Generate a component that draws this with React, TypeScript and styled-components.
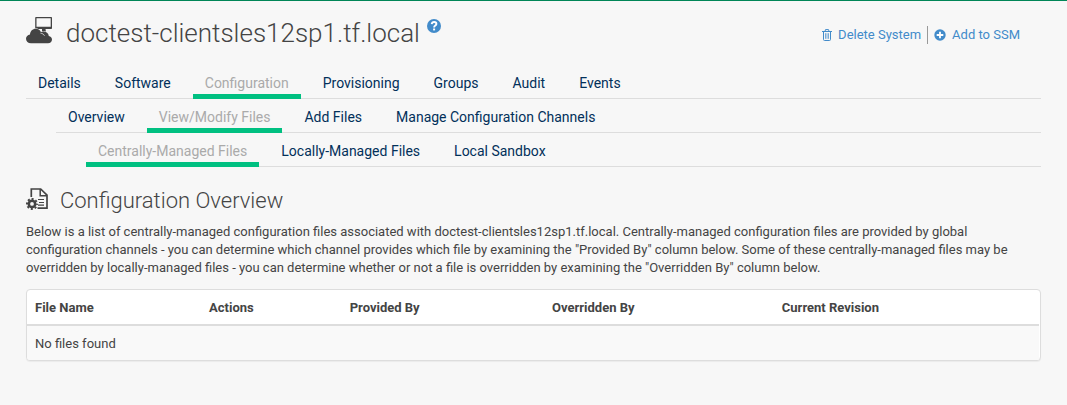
import React from 'react';
import styled, { createGlobalStyle } from 'styled-components';

const GlobalStyle = createGlobalStyle`
  *, *::before, *::after { box-sizing: border-box; }
  body {
    margin: 0;
    background: #f7f7f7;
    color: #444;
    font: 13px/18px Roboto, "Liberation Sans", sans-serif;
  }
`;

const Page = styled.main`
  border-top: 1px solid #008657;
  padding: 13px 26px 44px;
`;

const Header = styled.header`
  display: flex;
  justify-content: space-between;
  align-items: flex-start;
`;

const TitleGroup = styled.div`
  display: flex;
  align-items: flex-start;
`;

const Title = styled.h1`
  margin: 0 0 0 14px;
  font-size: 26px;
  line-height: 38px;
  font-weight: 300;
`;

const SystemIcon = styled.svg`
  width: 26px;
  height: 27px;
  margin-top: 3px;
  fill: #444;
`;

const HelpLink = styled.a`
  display: flex;
  margin: 5px 0 0 7px;
`;

const Toolbar = styled.div`
  display: flex;
  align-items: center;
  gap: 6px;
  padding: 12px 21px 0 0;
`;

const ToolbarLink = styled.a`
  display: flex;
  align-items: center;
  gap: 6px;
  color: #428bca;
  text-decoration: none;
`;

const Divider = styled.span`
  width: 1px;
  height: 18px;
  background: #999;
`;

const TabNav = styled.nav`
  padding-top: 16px;
`;

const TabRow = styled.ul<{ $level: number }>`
  display: flex;
  gap: 10px;
  margin: 0 0 0 ${(p) => p.$level * 30}px;
  padding: ${(p) => (p.$level ? 3 : 0)}px 0 0;
  list-style: none;
  border-bottom: 1px solid #ddd;
`;

const Tab = styled.a<{ $active: boolean }>`
  display: block;
  height: 31px;
  margin-bottom: -1px;
  padding: 4px 12px 0;
  border-bottom: 5px solid ${(p) => (p.$active ? '#00c081' : 'transparent')};
  color: ${(p) => (p.$active ? '#aaa' : '#02305a')};
  font-size: 14px;
  line-height: 22px;
  text-decoration: none;
`;

const SectionHeading = styled.div`
  display: flex;
  align-items: center;
  gap: 12px;
  padding-top: 18px;
`;

const FileIcon = styled.svg`
  width: 22px;
  height: 22px;
  margin-bottom: 4px;
`;

const SectionTitle = styled.h2`
  margin: 0;
  font-size: 22px;
  line-height: 32px;
  font-weight: 300;
`;

const Description = styled.p`
  margin: 6px 0 12px;
`;

const Panel = styled.section`
  overflow: hidden;
  padding-right: 1px;
  border: 1px solid #ddd;
  border-radius: 4px;
  background: #fff;
  box-shadow: 0 1px 1px rgba(0, 0, 0, 0.05);
`;

const Table = styled.table`
  width: 100%;
  border-collapse: separate;
  border-spacing: 0;
  text-align: left;
`;

const HeadCell = styled.th<{ $width?: string }>`
  width: ${(p) => p.$width ?? 'auto'};
  padding: 9px 8px 7px;
  border-bottom: 2px solid #ddd;
  font-weight: 700;
`;

const Cell = styled.td`
  padding: 9px 8px 7px;
  background: #f9f9f9;
`;

const tabRows = [
  {
    label: 'System',
    active: 'Configuration',
    tabs: ['Details', 'Software', 'Configuration', 'Provisioning', 'Groups', 'Audit', 'Events'],
  },
  {
    label: 'Configuration',
    active: 'View/Modify Files',
    tabs: ['Overview', 'View/Modify Files', 'Add Files', 'Manage Configuration Channels'],
  },
  {
    label: 'Files',
    active: 'Centrally-Managed Files',
    tabs: ['Centrally-Managed Files', 'Locally-Managed Files', 'Local Sandbox'],
  },
];

const columns = [
  { name: 'File Name', width: '17.2%' },
  { name: 'Actions', width: '13.9%' },
  { name: 'Provided By', width: '20%' },
  { name: 'Overridden By', width: '22.7%' },
  { name: 'Current Revision' },
];

const VirtualSystemIcon = () => (
  <SystemIcon viewBox="0 0 26 27" aria-hidden="true">
    <path fillRule="evenodd" d="M10 0h15.2q.8 0 .8.8v10.400q0 .8-.8.8H10q-.8 0-.8-.8V.8Q9.200 0 10 0ZM10.500 1.300v8.500h14.200V1.300Z" />
    <path d="M16 12h3.500l.5 3h-4Z" />
    <path
      stroke="#f7f7f7"
      strokeWidth="1"
      paintOrder="stroke"
      d="M5 26.300C2 26.300 0 24.300 0 21.800c0-2.300 1.700-4 4-4.400.2-3.200 2.600-5.600 5.700-5.600 2.300 0 4.200 1.200 5.200 3.200 3.700-1.500 7.500.4 7.900 3.900 1.900.3 3.200 1.700 3.200 3.600 0 2.200-1.700 3.800-4 3.800Z"
    />
    <path d="M14.500 16.200c2 .2 3.300 1.100 4 2.600" fill="none" stroke="#f7f7f7" strokeWidth=".7" />
  </SystemIcon>
);

const HelpIcon = () => (
  <svg width="14" height="14" viewBox="0 0 14 14" aria-hidden="true">
    <circle cx="7" cy="7" r="7" fill="#428bca" />
    <path d="M4.700 5.200C4.900 3.700 5.800 3 7.100 3c1.400 0 2.300.8 2.300 1.900C9.400 6.500 7.100 6.500 7.100 8.400" fill="none" stroke="#fff" strokeWidth="1.900" />
    <path d="M6.100 9.500h2v1.900h-2z" fill="#fff" />
  </svg>
);

const TrashIcon = () => (
  <svg width="10" height="12" viewBox="0 0 10 12" fill="none" stroke="#428bca" aria-hidden="true">
    <path d="M0 2.500h10M3 2.300l.5-1.700h3l.5 1.700M1.500 2.500v8q0 1 1 1h5q1 0 1-1v-8" />
    <path d="M3.500 4.200v5.600M5 4.200v5.600M6.500 4.200v5.600" strokeWidth=".7" />
  </svg>
);

const AddIcon = () => (
  <svg width="12" height="12" viewBox="0 0 12 12" aria-hidden="true">
    <circle cx="6" cy="6" r="5.700" fill="#428bca" />
    <path d="M6 2.700v6.600M2.700 6h6.600" stroke="#fff" strokeWidth="1.800" />
  </svg>
);

const ConfigFileIcon = () => (
  <FileIcon viewBox="0 0 22 22" fill="none" stroke="#444" aria-hidden="true">
    <path d="M5.300 9V1h9.400L21 7.200v12.900h-9.500" strokeWidth="1.700" />
    <path d="M14.200 1v6.700H21" strokeWidth="1.500" />
    <path d="M12 11.500h6M13 14.500h5M12 17.200h6" strokeWidth="1.200" />
    <circle cx="6" cy="15.900" r="3.200" strokeWidth="2.600" />
    <circle cx="6" cy="15.900" r="5" strokeWidth="2" strokeDasharray="2 1.927" strokeDashoffset="1" />
  </FileIcon>
);

export default function App() {
  return (
    <>
      <GlobalStyle />
      <Page>
        <Header>
          <TitleGroup>
            <VirtualSystemIcon />
            <Title>doctest-clientsles12sp1.tf.local</Title>
            <HelpLink href="#help" aria-label="Help">
              <HelpIcon />
            </HelpLink>
          </TitleGroup>
          <Toolbar>
            <ToolbarLink href="#delete">
              <TrashIcon />
              Delete System
            </ToolbarLink>
            <Divider />
            <ToolbarLink href="#ssm">
              <AddIcon />
              Add to SSM
            </ToolbarLink>
          </Toolbar>
        </Header>

        <TabNav>
          {tabRows.map((row, level) => (
            <TabRow key={row.label} $level={level} aria-label={row.label}>
              {row.tabs.map((tab) => (
                <li key={tab}>
                  <Tab href="#tab" $active={tab === row.active} aria-current={tab === row.active ? 'page' : undefined}>
                    {tab}
                  </Tab>
                </li>
              ))}
            </TabRow>
          ))}
        </TabNav>

        <SectionHeading>
          <ConfigFileIcon />
          <SectionTitle>Configuration Overview</SectionTitle>
        </SectionHeading>
        <Description>
          Below is a list of centrally-managed configuration files associated with doctest-clientsles12sp1.tf.local.
          Centrally-managed configuration files are provided by global configuration channels - you can determine
          which channel provides which file by examining the "Provided By" column below. Some of these
          centrally-managed files may be overridden by locally-managed files - you can determine whether or not a
          file is overridden by examining the "Overridden By" column below.
        </Description>

        <Panel>
          <Table>
            <thead>
              <tr>
                {columns.map((column) => (
                  <HeadCell key={column.name} scope="col" $width={column.width}>
                    {column.name}
                  </HeadCell>
                ))}
              </tr>
            </thead>
            <tbody>
              <tr>
                <Cell colSpan={columns.length}>No files found</Cell>
              </tr>
            </tbody>
          </Table>
        </Panel>
      </Page>
    </>
  );
}
